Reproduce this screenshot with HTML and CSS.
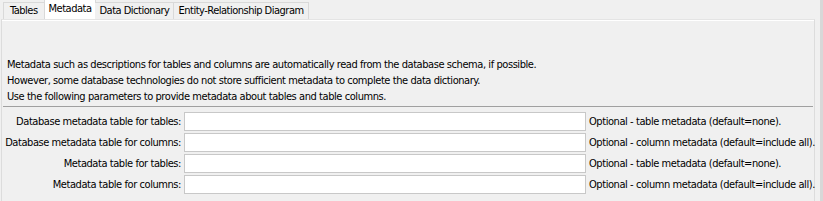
FILE: index.html
```html
<!DOCTYPE html>
<html>
<head>
<meta charset="utf-8">
<link rel="stylesheet" href="styles.css">
</head>
<body>
<div class="window">
  <div class="tabs">
    <div class="tab">Tables</div>
    <div class="tab active">Metadata</div>
    <div class="tab">Data Dictionary</div>
    <div class="tab">Entity-Relationship Diagram</div>
  </div>
  <div class="panel">
    <div class="intro">
      <p>Metadata such as descriptions for tables and columns are automatically read from the database schema, if possible.</p>
      <p>However, some database technologies do not store sufficient metadata to complete the data dictionary.</p>
      <p>Use the following parameters to provide metadata about tables and table columns.</p>
    </div>
    <div class="form">
      <label class="lbl">Database metadata table for tables:</label>
      <div class="field"></div>
      <span class="note">Optional - table metadata (default=none).</span>
      <label class="lbl">Database metadata table for columns:</label>
      <div class="field"></div>
      <span class="note">Optional - column metadata (default=include all).</span>
      <label class="lbl">Metadata table for tables:</label>
      <div class="field"></div>
      <span class="note">Optional - table metadata (default=none).</span>
      <label class="lbl">Metadata table for columns:</label>
      <div class="field"></div>
      <span class="note">Optional - column metadata (default=include all).</span>
    </div>
  </div>
  <div class="scroll"></div>
</div>
</body>
</html>
```
FILE: styles.css
```css
html, body {
  margin: 0;
  padding: 0;
  background: #f0f0f0;
}
body {
  font-family: "DejaVu Sans Condensed", "DejaVu Sans", sans-serif;
  font-size: 11px;
  letter-spacing: -0.43px;
  color: #000;
  width: 823px;
  height: 201px;
  overflow: hidden;
  white-space: nowrap;
}
.window {
  position: relative;
  width: 823px;
  height: 201px;
}
.scroll {
  position: absolute;
  top: 0;
  right: 0;
  width: 3px;
  height: 201px;
  background: #d8d8d8;
}
.tabs {
  display: flex;
  align-items: flex-end;
  height: 19px;
  padding-left: 3px;
}
.tab {
  height: 16px;
  line-height: 16px;
  padding: 0 4px;
  letter-spacing: -0.5px;
  border: 1px solid #d9d9d9;
  border-bottom: none;
  border-right: none;
  background: #f0f0f0;
}
.tab:first-child { padding: 0 6px; }
.tab:last-child { border-right: 1px solid #d9d9d9; }
.tab.active {
  height: 19px;
  line-height: 18px;
  background: #fff;
  margin: 0 -1px 0 0;
  border-right: 1px solid #d9d9d9;
}
.tab.active + .tab { border-left: none; }
.panel {
  margin-left: 1px;
  width: 814px;
  height: 182px;
  border: 1px solid #dcdcdc;
  border-top: 1px solid #e4e4e4;
  box-shadow: inset 0 1px 0 #fff;
  border-bottom: none;
  box-sizing: border-box;
}
.intro {
  padding: 37px 0 1px 4px;
  border-bottom: 1px solid #a0a0a0;
  margin: 0 1px 0 1px;
}
.intro p {
  margin: 0;
  height: 16px;
  line-height: 16px;
}
.form {
  display: grid;
  grid-template-columns: 179px 402px auto;
  column-gap: 3px;
  row-gap: 2px;
  padding-top: 5px;
  align-items: center;
}
.lbl {
  text-align: right;
}
.field {
  height: 19px;
  background: #fff;
  border: 1px solid #c8c8c8;
  box-sizing: border-box;
}
```
